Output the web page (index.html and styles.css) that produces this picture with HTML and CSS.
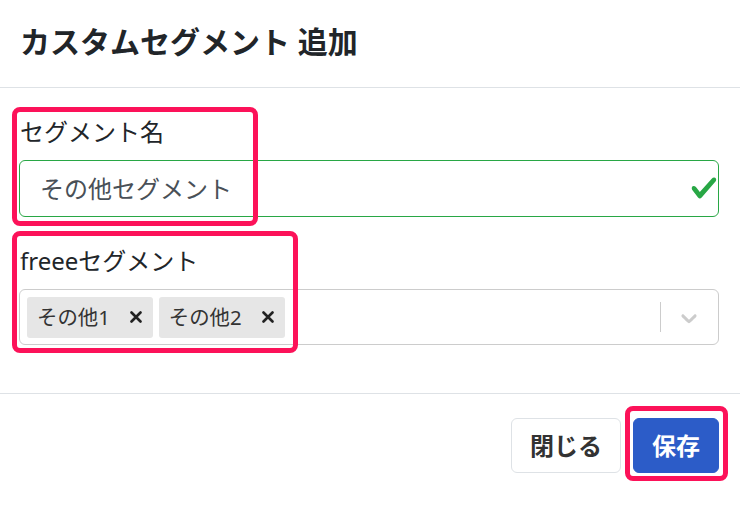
FILE: index.html
```html
<!DOCTYPE html>
<html lang="ja">
<head>
<meta charset="utf-8">
<title>カスタムセグメント 追加</title>
<link rel="stylesheet" href="styles.css">
</head>
<body>
<div class="modal">
  <div class="modal-header">
    <h1 class="modal-title">カスタムセグメント 追加</h1>
  </div>
  <div class="modal-body">
    <div class="form-group">
      <label class="form-label">セグメント名</label>
      <div class="input valid">
        <span class="input-text">その他セグメント</span>
        <svg class="check" viewBox="0 0 8 8" width="28" height="28"><path fill="#28a745" d="M2.3 6.73L.6 4.53c-.4-1.04.46-1.4 1.1-.8l1.1 1.4 3.4-3.8c.6-.63 1.6-.27 1.2.7l-4 4.6c-.43.5-.8.4-1.1.1z"/></svg>
      </div>
    </div>
    <div class="form-group form-group-last">
      <label class="form-label">freeeセグメント</label>
      <div class="select">
        <div class="tags">
          <span class="tag"><span class="tag-label">その他1</span><svg class="tag-x" viewBox="0 0 12 12" width="12" height="12"><path d="M1.5 1.5L10.5 10.5M10.5 1.5L1.5 10.5" stroke="#222" stroke-width="2.6" stroke-linecap="round"/></svg></span>
          <span class="tag"><span class="tag-label">その他2</span><svg class="tag-x" viewBox="0 0 12 12" width="12" height="12"><path d="M1.5 1.5L10.5 10.5M10.5 1.5L1.5 10.5" stroke="#222" stroke-width="2.6" stroke-linecap="round"/></svg></span>
        </div>
        <div class="indicators">
          <span class="sep"></span>
          <svg class="chevron" viewBox="0 0 20 20" width="26" height="26"><path fill="#cccccc" d="M4.516 7.548c0.436-0.446 1.043-0.481 1.576 0l3.908 3.747 3.908-3.747c0.533-0.481 1.141-0.446 1.574 0 0.436 0.445 0.408 1.197 0 1.615-0.406 0.418-4.695 4.502-4.695 4.502-0.217 0.223-0.502 0.335-0.787 0.335s-0.57-0.112-0.789-0.335c0 0-4.287-4.084-4.695-4.502s-0.436-1.17 0-1.615z"/></svg>
        </div>
      </div>
    </div>
    <div class="mark mark-1"></div>
    <div class="mark mark-2"></div>
  </div>
  <div class="modal-footer">
    <button class="btn btn-close">閉じる</button>
    <button class="btn btn-save">保存</button>
    <div class="mark mark-3"></div>
  </div>
</div>
</body>
</html>
```

FILE: styles.css
```css
* { box-sizing: border-box; }
html, body { margin: 0; padding: 0; background: #ffffff; }
body {
  font-family: "Noto Sans", "Noto Sans CJK JP", sans-serif;
  color: #212529;
}
.modal { width: 740px; position: relative; }
.modal-header {
  padding: 19px 20px 23px;
  border-bottom: 1px solid #dee2e6;
}
.modal-title {
  margin: 0;
  font-size: 30px;
  line-height: 45px;
  font-weight: 700;
  color: #212529;
}
.modal-body {
  position: relative;
  padding: 26px 21px 48px 19px;
}
.form-group { margin-bottom: 26px; }
.form-group-last { margin-bottom: 0; }
.form-label {
  display: block;
  font-size: 24px;
  line-height: 36px;
  margin: 0 0 10px 1px;
}
.input {
  height: 57px;
  border: 1px solid #ced4da;
  border-radius: 6px;
  display: flex;
  align-items: center;
  padding: 0 0 0 20px;
}
.input.valid { border-color: #28a745; }
.input-text {
  flex: 1;
  font-size: 24px;
  color: #495057;
  line-height: 36px;
}
.check { display: block; margin-top: -1px; }
.select {
  height: 56px;
  border: 1px solid #cccccc;
  border-radius: 6px;
  display: flex;
  align-items: center;
  padding: 0 0 0 7px;
}
.tags { flex: 1; display: flex; gap: 6px; }
.tag {
  display: flex;
  align-items: center;
  height: 41px;
  background: #e6e6e6;
  border-radius: 3px;
  padding: 0 11px 0 10px;
  gap: 20px;
}
.tag-label {
  font-size: 20.4px;
  color: #333333;
  line-height: 30px;
}
.tag-x { display: block; }
.indicators {
  display: flex;
  align-items: center;
  align-self: stretch;
  padding: 0 16px 0 0;
}
.sep {
  width: 1px;
  height: 30px;
  background: #cccccc;
  margin-right: 15px;
}
.chevron { display: block; margin-top: 2px; }
.modal-footer {
  position: relative;
  border-top: 1px solid #dee2e6;
  padding: 24px 21px 45px 0;
  display: flex;
  justify-content: flex-end;
  gap: 12px;
}
.btn {
  height: 55px;
  border-radius: 6px;
  font-family: "Noto Sans", "Noto Sans CJK JP", sans-serif;
  font-size: 24px;
  font-weight: 700;
  line-height: 36px;
  padding: 0;
  cursor: pointer;
}
.btn-close {
  width: 110px;
  background: #ffffff;
  border: 1px solid #dee2e6;
  color: #333333;
}
.btn-save {
  width: 86px;
  background: #2c5cc8;
  border: 1px solid #2c5cc8;
  color: #ffffff;
}
.mark {
  position: absolute;
  border: 5px solid #fc1259;
  border-radius: 8px;
  pointer-events: none;
}
.mark-1 { left: 12px; top: 19px; width: 246px; height: 119px; }
.mark-2 { left: 12px; top: 143px; width: 286px; height: 122px; }
.mark-3 { right: 12px; top: 12px; width: 103px; height: 75px; }
```
